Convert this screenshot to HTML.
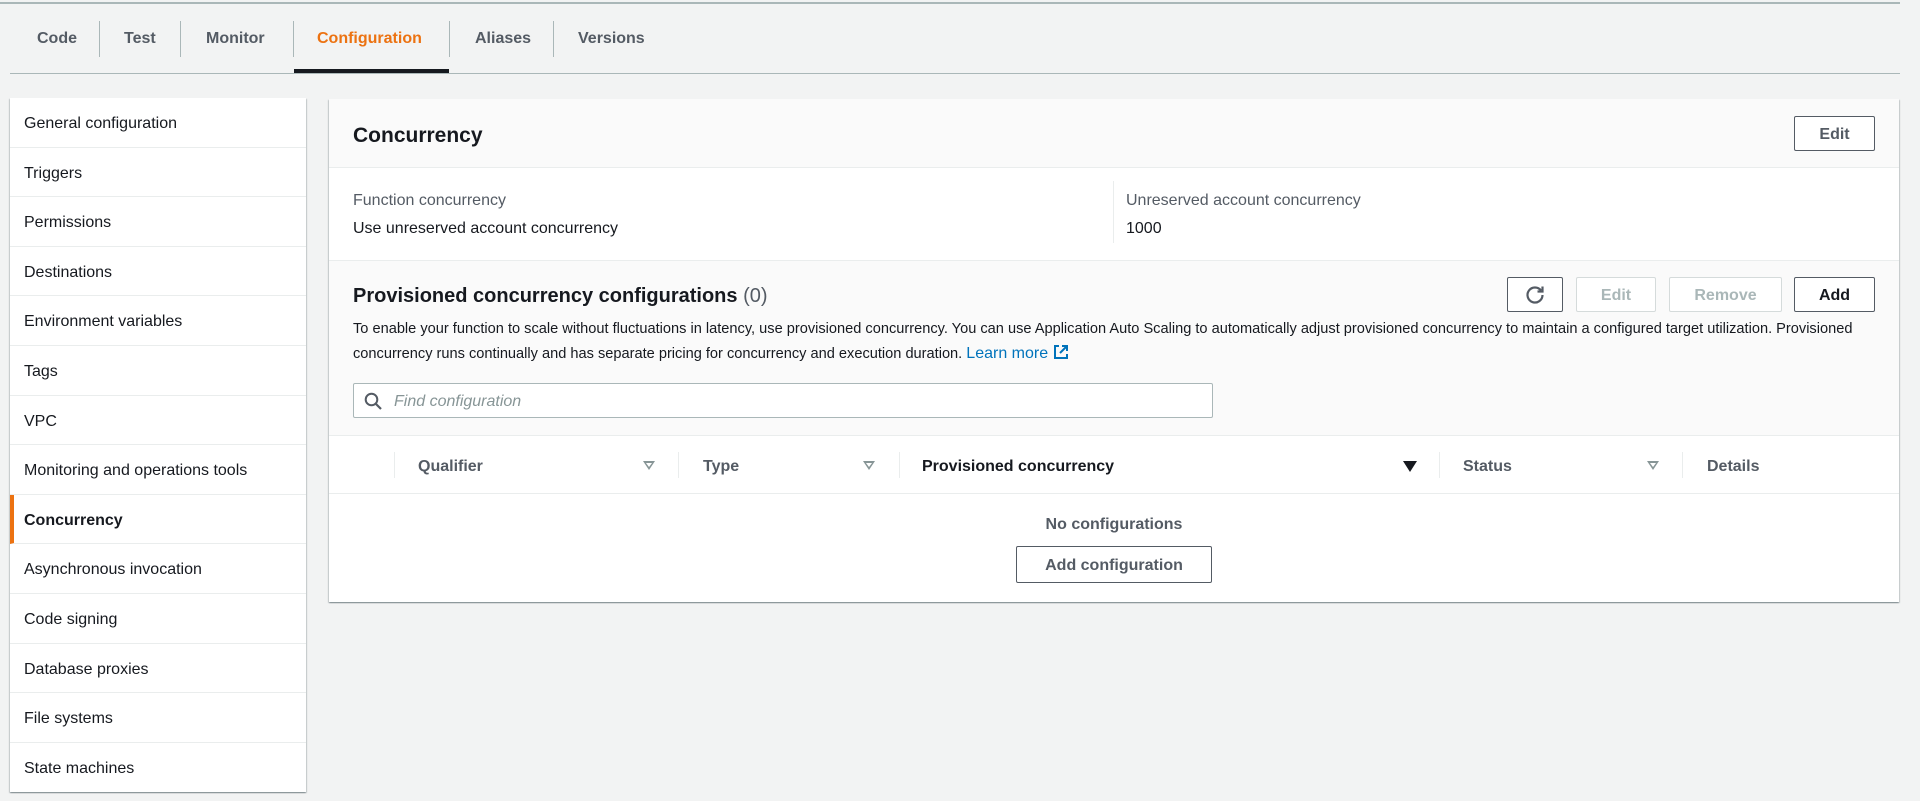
<!DOCTYPE html>
<html><head><meta charset="utf-8"><style>
*{box-sizing:border-box;margin:0;padding:0}
body{width:1920px;height:801px;background:#f2f3f3;font-family:"Liberation Sans",sans-serif;color:#16191f;position:relative;overflow:hidden}
.abs{position:absolute}
.topline{left:0;top:0;width:1900px;height:4px;border-bottom:2px solid #aab7b8;background:#f2f3f3}
.tabs{left:10px;top:18px;width:1890px;height:56px;border-bottom:1px solid #aab7b8}
.tab{position:absolute;top:12px;font-size:16px;font-weight:bold;color:#545b64}
.sep{position:absolute;top:3px;width:1px;height:36px;background:#aab7b8}
.side{left:10px;top:98px;width:296px;background:#fff;box-shadow:0 1px 1px rgba(0,28,36,.3),1px 1px 1px rgba(0,28,36,.15),-1px 1px 1px rgba(0,28,36,.15)}
.side div{height:49.6px;line-height:52px;padding-left:14px;font-size:16px;color:#16191f;border-bottom:1px solid #eaeded}
.side div.act{font-weight:bold;border-left:4px solid #ec7211;padding-left:10px}
.main{left:329px;top:99px;width:1570px;height:503px;background:#fff;box-shadow:0 1px 1px rgba(0,28,36,.3),1px 1px 1px rgba(0,28,36,.15),-1px 1px 1px rgba(0,28,36,.15)}
.btn{position:absolute;border:1px solid #545b64;border-radius:2px;background:#fff;font-weight:bold;font-size:16px;color:#545b64;text-align:center}
.dis{border-color:#d5dbdb;color:#aab7b8}
.th{position:absolute;top:458px;font-size:16px;font-weight:bold;color:#545b64}
.csep{position:absolute;top:452px;width:1px;height:26px;background:#eaeded}
.arr{position:absolute;top:461px;width:0;height:0;border-left:6px solid transparent;border-right:6px solid transparent;border-top:9px solid #879596}
.arr.o:after{content:"";position:absolute;left:-3px;top:-7px;border-left:3px solid transparent;border-right:3px solid transparent;border-top:4px solid #fff}
</style></head><body>
<div class="abs topline"></div>
<div class="abs tabs">
<span class="tab" style="left:27px">Code</span>
<span class="sep" style="left:89px"></span>
<span class="tab" style="left:114px">Test</span>
<span class="sep" style="left:170px"></span>
<span class="tab" style="left:196px">Monitor</span>
<span class="sep" style="left:283px"></span>
<span class="tab" style="left:307px;color:#ec7211">Configuration</span>
<span class="abs" style="left:284px;top:51px;width:155px;height:4px;background:#16191f"></span>
<span class="sep" style="left:439px"></span>
<span class="tab" style="left:465px">Aliases</span>
<span class="sep" style="left:543px"></span>
<span class="tab" style="left:568px">Versions</span>
</div>
<div class="abs side">
<div>General configuration</div><div>Triggers</div><div>Permissions</div><div>Destinations</div><div>Environment variables</div><div>Tags</div><div>VPC</div><div>Monitoring and operations tools</div><div class="act">Concurrency</div><div>Asynchronous invocation</div><div>Code signing</div><div>Database proxies</div><div>File systems</div><div style="border-bottom:none">State machines</div>
</div>
<div class="abs main">
<div class="abs" style="left:0;top:0;width:1570px;height:69px;background:#fafafa;border-bottom:1px solid #eaeded"></div>
<div class="abs" style="left:24px;top:25px;font-size:21px;font-weight:bold">Concurrency</div>
<div class="btn" style="left:1465px;top:17px;width:81px;height:35px;line-height:35px">Edit</div>
<div class="abs" style="left:24px;top:93px;font-size:16px;color:#545b64">Function concurrency</div>
<div class="abs" style="left:24px;top:121px;font-size:16px">Use unreserved account concurrency</div>
<div class="abs" style="left:784px;top:82px;width:1px;height:62px;background:#eaeded"></div>
<div class="abs" style="left:797px;top:93px;font-size:16px;color:#545b64">Unreserved account concurrency</div>
<div class="abs" style="left:797px;top:121px;font-size:16px">1000</div>
<div class="abs" style="left:0;top:161px;width:1570px;height:176px;background:#fafafa;border-top:1px solid #eaeded;border-bottom:1px solid #eaeded"></div>
<div class="abs" style="left:24px;top:186px;font-size:20px;font-weight:bold">Provisioned concurrency configurations <span style="font-weight:normal;color:#545b64">(0)</span></div>
<div class="btn" style="left:1178px;top:178px;width:56px;height:35px"><svg width="22" height="22" viewBox="0 0 22 22" style="margin-top:6px"><path d="M17 6.5A7.5 7.5 0 1 0 18.5 11" fill="none" stroke="#545b64" stroke-width="2.2"/><path d="M18.5 2.5v5h-5" fill="none" stroke="#545b64" stroke-width="2.2"/></svg></div>
<div class="btn dis" style="left:1247px;top:178px;width:80px;height:35px;line-height:35px">Edit</div>
<div class="btn dis" style="left:1340px;top:178px;width:113px;height:35px;line-height:35px">Remove</div>
<div class="btn" style="left:1465px;top:178px;width:81px;height:35px;line-height:35px;color:#16191f">Add</div>
<div class="abs" style="left:24px;top:218px;width:1530px;font-size:14.6px;line-height:24.5px;color:#16191f">To enable your function to scale without fluctuations in latency, use provisioned concurrency. You can use Application Auto Scaling to automatically adjust provisioned concurrency to maintain a configured target utilization. Provisioned concurrency runs continually and has separate pricing for concurrency and execution duration. <span style="color:#0073bb;font-size:16px">Learn more <svg width="16" height="16" viewBox="0 0 16 16" style="vertical-align:-2px"><path d="M6 2H2v12h12v-4M9 2h5v5M14 2L7 9" fill="none" stroke="#0073bb" stroke-width="2"/></svg></span></div>
<div class="abs" style="left:24px;top:284px;width:860px;height:35px;border:1px solid #aab7b8;border-radius:2px;background:#fff"></div>
<svg class="abs" style="left:35px;top:293px" width="19" height="19" viewBox="0 0 19 19"><circle cx="7.5" cy="7.5" r="5.8" fill="none" stroke="#545b64" stroke-width="2"/><path d="M12 12l5 5" stroke="#545b64" stroke-width="2.2"/></svg>
<div class="abs" style="left:65px;top:294px;font-size:16px;font-style:italic;color:#879596">Find configuration</div>
<div class="abs" style="left:0;top:394px;width:1570px;height:1px;background:#eaeded"></div>
</div>
<div class="csep" style="left:394px"></div>
<div class="th" style="left:418px">Qualifier</div><div class="arr o" style="left:643px"></div>
<div class="csep" style="left:678px"></div>
<div class="th" style="left:703px">Type</div><div class="arr o" style="left:863px"></div>
<div class="csep" style="left:899px"></div>
<div class="th" style="left:922px;color:#16191f">Provisioned concurrency</div><div class="arr" style="left:1403px;border-top-color:#16191f;border-left-width:7px;border-right-width:7px;border-top-width:11px"></div>
<div class="csep" style="left:1439px"></div>
<div class="th" style="left:1463px">Status</div><div class="arr o" style="left:1647px"></div>
<div class="csep" style="left:1682px"></div>
<div class="th" style="left:1707px">Details</div>
<div class="abs" style="left:0;top:516px;width:2228px;text-align:center;font-size:16px;font-weight:bold;color:#545b64">No configurations</div>
<div class="btn" style="left:1016px;top:546px;width:196px;height:37px;line-height:37px">Add configuration</div>
</body></html>
